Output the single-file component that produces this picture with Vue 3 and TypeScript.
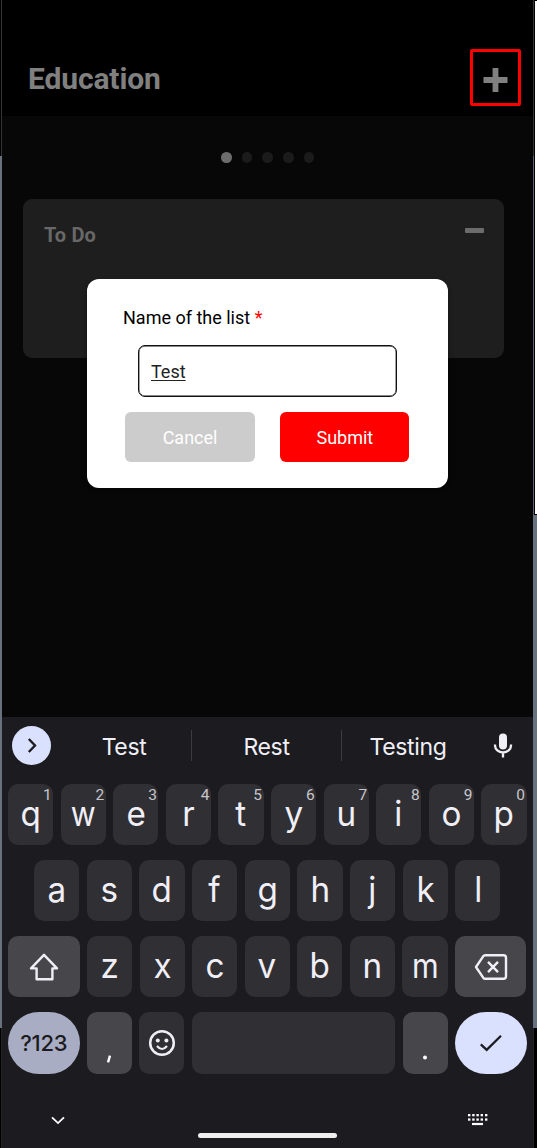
<script setup lang="ts">
interface Key {
  label: string
  hint?: string
}

const topRow: Key[] = 'qwertyuiop'.split('').map((label, i) => ({ label, hint: String((i + 1) % 10) }))
const homeRow: Key[] = 'asdfghjkl'.split('').map((label) => ({ label }))
const bottomRow: Key[] = 'zxcvbnm'.split('').map((label) => ({ label }))
const suggestions: string[] = ['Test', 'Rest', 'Testing']
const pages: number[] = [0, 1, 2, 3, 4]
const keyboardDots: number[] = [0, 4.2, 8.4, 12.6, 17]
const isBroad = (label: string): boolean => label === 'w' || label === 'm'
</script>

<template>
  <div class="stage">
    <div class="edge left"><i class="dark" /><i class="slate" /><i class="dark end" /></div>
    <main class="phone">
      <header class="header">
        <h1>Education</h1>
        <button class="add" aria-label="Add list">
          <svg width="25" height="24" viewBox="0 0 25 24"><path d="M9.6 0h5.8v9h9.1v6h-9.1v9H9.6v-9H.5V9h9.1z" fill="#808080" /></svg>
        </button>
      </header>

      <section class="board">
        <nav class="dots">
          <span v-for="p in pages" :key="p" :class="{ active: p === 0 }" />
        </nav>
        <article class="card">
          <h2>To Do</h2>
          <span class="minus" />
        </article>
      </section>

      <form class="modal" @submit.prevent>
        <label>Name of the list <b>*</b></label>
        <div class="field"><span>Test</span></div>
        <div class="actions">
          <button type="button" class="cancel">Cancel</button>
          <button type="submit" class="submit">Submit</button>
        </div>
      </form>

      <section class="keyboard">
        <div class="strip">
          <span class="expand">
            <svg width="39" height="39" viewBox="0 0 39 39"><path d="M16.8 13l6.2 6.5-6.2 6.5" fill="none" stroke="#1c1b20" stroke-width="2.4" /></svg>
          </span>
          <div class="suggestions">
            <span v-for="s in suggestions" :key="s">{{ s }}</span>
          </div>
          <svg class="mic" width="20" height="26" viewBox="0 0 20 26">
            <rect x="6" y="0.5" width="8" height="16" rx="4" fill="#f0eff7" />
            <path d="M2 11.5v1a8 7 0 0 0 16 0v-1M10 19.5v5" fill="none" stroke="#f0eff7" stroke-width="2.3" />
          </svg>
        </div>

        <div class="rows">
          <div class="row">
            <span v-for="k in topRow" :key="k.label" class="key"><b :class="{ broad: isBroad(k.label) }">{{ k.label }}</b><sup>{{ k.hint }}</sup></span>
          </div>
          <div class="row home">
            <span v-for="k in homeRow" :key="k.label" class="key"><b>{{ k.label }}</b></span>
          </div>
          <div class="row">
            <span class="key wide light">
              <svg width="30" height="28" viewBox="0 0 30 28"><path d="M15 1.8L28 15.4H23.4V26.2H7.6V15.4H2z" fill="none" stroke="#f0eff7" stroke-width="2.4" stroke-linejoin="round" /></svg>
            </span>
            <span v-for="k in bottomRow" :key="k.label" class="key"><b :class="{ broad: isBroad(k.label) }">{{ k.label }}</b></span>
            <span class="key wide light">
              <svg width="34" height="28" viewBox="0 0 34 28"><path d="M11.2 2.2H29.5Q32 2.2 32 4.7V23.3Q32 25.8 29.5 25.8H11.2Q10 25.8 9.2 24.7L2 14 9.2 3.3Q10 2.2 11.2 2.2zM14 8.9l10 10.2M24 8.9L14 19.1" fill="none" stroke="#f0eff7" stroke-width="2.4" stroke-linejoin="round" /></svg>
            </span>
          </div>
          <div class="row last">
            <span class="key wide symbols">?123</span>
            <span class="key light">
              <svg class="low" width="8" height="10" viewBox="0 0 8 10"><path d="M5 1.6L3 8.4" stroke="#fff" stroke-width="2.4" /></svg>
            </span>
            <span class="key">
              <svg width="28" height="28" viewBox="0 0 28 28">
                <circle cx="14" cy="14" r="11.8" fill="none" stroke="#f0eff7" stroke-width="2.5" />
                <circle cx="9.8" cy="11.5" r="2" fill="#f0eff7" /><circle cx="18.4" cy="11.5" r="2" fill="#f0eff7" />
                <path d="M9 17q5 6 10 0" fill="none" stroke="#f0eff7" stroke-width="2.2" />
              </svg>
            </span>
            <span class="key space" />
            <span class="key light">
              <svg class="low" width="6" height="10" viewBox="0 0 6 10"><circle cx="3" cy="3.4" r="2" fill="#fff" /></svg>
            </span>
            <span class="key wide enter">
              <svg width="24" height="20" viewBox="0 0 24 20"><path d="M1.8 11.3l5.9 5.5L22 2.8" fill="none" stroke="#1c1b20" stroke-width="2.3" /></svg>
            </span>
          </div>
        </div>

        <footer class="system">
          <svg class="chevron" width="14" height="9" viewBox="0 0 14 9"><path d="M1 1.4l6 5.7 6-5.7" fill="none" stroke="#fff" stroke-width="1.8" /></svg>
          <span class="handle" />
          <svg class="switcher" width="20" height="12" viewBox="0 0 20 12">
            <g fill="#fff">
              <rect v-for="x in keyboardDots" :key="'a' + x" :x="x" y="0" width="2.4" height="2.3" />
              <rect v-for="x in keyboardDots" :key="'b' + x" :x="x" y="4.4" width="2.4" height="2.3" />
              <rect x="4" y="8.9" width="11" height="2.2" />
            </g>
          </svg>
        </footer>
      </section>
    </main>
    <div class="edge right"><i class="dark window" /><i class="slate" /><i class="dark end" /></div>
  </div>
</template>

<style>
html, body { margin: 0; background: #000; }
</style>

<style scoped>
* { box-sizing: border-box; }
.stage {
  display: flex;
  width: 537px;
  height: 1148px;
  overflow: hidden;
  background: #000;
  font-family: Roboto, "Liberation Sans", sans-serif;
}
.edge { display: flex; flex-direction: column; flex: none; }
.edge i { display: block; }
.left { width: 2px; }
.right { width: 4px; }
.dark { background: #000; }
.left .dark { height: 156px; border-right: 1px solid #333; }
.slate { flex: 1; background: #68727e; }
.left .dark.end, .right .dark.end { height: 120px; border: 0; border-left: 1px solid #222; }
.left .dark.end { border-left: 0; border-right: 1px solid #222; }
.right .window {
  height: 515px;
  background: linear-gradient(#fff, #fff) 2px 1px / 2px 513px no-repeat, linear-gradient(#333 0 156px, #596270 156px) 0 0 / 1px 515px no-repeat, #000;
}
button { border: 0; padding: 0; font: inherit; background: none; }

.phone {
  position: relative;
  display: flex;
  flex-direction: column;
  width: 531px;
  height: 1148px;
  background: #070707;
}
.header {
  display: flex;
  justify-content: space-between;
  height: 116px;
  padding: 49px 12px 0 26px;
  background: #000;
}
h1 { margin: 12px 0 0; font-size: 30px; line-height: 36px; font-weight: 700; letter-spacing: -0.12px; color: #808080; }
.add {
  display: flex;
  align-items: center;
  justify-content: center;
  width: 51px;
  height: 57px;
  padding-top: 5px;
  border: 3px solid #f00;
  border-radius: 2px;
}
.board { height: 601px; padding: 36px 29px 0 21px; }
.dots { display: flex; gap: 10.2px; margin-left: 198px; height: 47px; }
.dots span { width: 10.5px; height: 10.5px; border-radius: 50%; background: #1b1b1b; }
.dots .active { background: #6c6c6c; }
.card {
  display: flex;
  justify-content: space-between;
  height: 159px;
  padding: 22px 20px 0 21px;
  border-radius: 9px;
  background: #1e1e1e;
}
h2 { margin: 1px 0 0; font-size: 20px; line-height: 27px; font-weight: 700; letter-spacing: 0.15px; color: #686868; }
.minus { width: 19px; height: 5px; margin-top: 7px; border-radius: 1px; background: #6c6c6c; }

.modal {
  position: absolute;
  left: 85px;
  top: 279px;
  width: 361px;
  height: 209px;
  padding: 27px 36px 0;
  border-radius: 12px;
  background: #fff;
  box-shadow: 0 2px 5px rgba(0, 0, 0, 0.4);
  color: #000;
  font-size: 18px;
}
.modal label { display: block; height: 39px; line-height: 24px; }
.modal label b { font-weight: 400; color: #f00; }
.field {
  display: flex;
  align-items: center;
  width: 258.5px;
  height: 52px;
  margin-left: 15px;
  padding-left: 12px;
  border: 1px solid #111;
  border-radius: 7px;
  box-shadow: inset 0 0 0 0.4px #111;
}
.field span { color: #222; text-decoration: underline; text-decoration-thickness: 1px; text-underline-offset: 2px; }
.actions { display: flex; gap: 25.5px; margin: 15px 0 0 2.4px; }
.actions button { width: 129.3px; height: 50px; border-radius: 6px; color: #fff; }
.cancel { background: #ccc; }
.submit { background: #f00; }

.keyboard {
  flex: 1;
  display: flex;
  flex-direction: column;
  background: #1c1b1f;
  color: #f0eff7;
  font-family: Inter, Roboto, sans-serif;
}
.strip { display: flex; align-items: center; height: 67px; padding: 0 20px 10px 10px; }
.expand { width: 39px; height: 39px; border-radius: 50%; background: #dae1ff; }
.expand svg { display: block; }
.suggestions { display: flex; flex: none; width: 433px; margin-left: 6px; }
.suggestions span {
  flex: none;
  width: 150px;
  height: 31px;
  line-height: 34px;
  text-align: center;
  font-size: 23px;
  letter-spacing: -0.35px;
  border-right: 1px solid #3c3b40;
}
.suggestions span:first-child { width: 135px; }
.suggestions span:last-child { width: 132px; border: 0; }
.mic { flex: none; margin-left: 3px; }
.rows { display: flex; flex-direction: column; gap: 15px; padding: 0 6.5px 0 6px; }
.row { display: flex; gap: 7.45px; height: 61px; }
.last { height: 62px; }
.home { padding: 0 26.2px; }
.key {
  position: relative;
  display: flex;
  flex: 1 1 0;
  align-items: center;
  justify-content: center;
  border-radius: 10px;
  background: #302f34;
  font-size: 35px;
  line-height: 59px;
  padding-bottom: 2px;
}
.key b { font-weight: 400; transform: scaleX(0.95); }
.key .broad { transform: scaleX(0.87); }
.key sup {
  position: absolute;
  top: 3px;
  right: 1.5px;
  font-family: Roboto, sans-serif;
  font-size: 15.5px;
  line-height: 17px;
  color: #c7c6cc;
}
.wide { flex: 0 0 71.5px; }
.light { background: #47464b; }
.symbols {
  padding: 0;
  border-radius: 31px;
  background: #a8adc4;
  color: #1c1b20;
  font-size: 22px;
  font-weight: 500;
  letter-spacing: -0.3px;
  line-height: 62px;
}
.key > svg { position: relative; top: 1px; }
.space { flex: 0 0 203.5px; }
.low { margin-top: 31px; }
.enter { border-radius: 31px; background: #dae1ff; }
.system { display: flex; height: 74px; align-items: flex-start; }
.chevron { margin: 42px 0 0 49px; }
.handle { width: 139px; height: 5px; margin: 59px 0 0 133px; border-radius: 3px; background: #eee; }
.switcher { margin: 40px 0 0 131px; }
</style>
